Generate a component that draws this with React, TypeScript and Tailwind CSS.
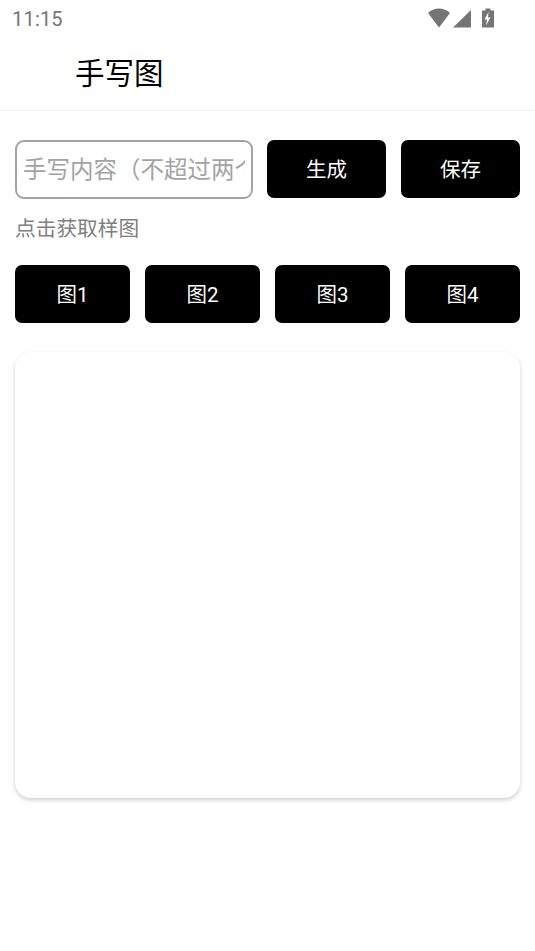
const cjk = "font-['Roboto','Noto_Sans_CJK_SC',sans-serif]";

function StatusIcons() {
  return (
    <svg width="66" height="24" viewBox="0 0 66 24" fill="#757575">
      <path d="M0 6C3 3 7 1.500 11 1.500S19 3 22 6L11 20.500Z" />
      <path d="M25 20.500 43 3V20.500Z" />
      <path fillRule="evenodd" d="M54 3.500h3.500V1.500h5v2H66V20.500H54ZM60.500 5 56.500 12.500H59l-1 6 4.500-8H60Z" />
    </svg>
  );
}

function BlackButton({ label, className }: { label: string; className: string }) {
  return (
    <button className={`flex h-[58px] items-center justify-center rounded-[7px] bg-black pt-[3px] text-[20.500px] text-white ${className}`}>
      {label}
    </button>
  );
}

export default function App() {
  return (
    <div className={`flex h-[951px] w-[535px] flex-col bg-white ${cjk}`}>
      <div className="flex h-[37px] items-center justify-between pl-[12px] pr-[41px]">
        <span className="text-[20px] leading-none tracking-[0.2px] text-[#757575]">11:15</span>
        <StatusIcons />
      </div>

      <div className="flex h-[74px] items-center border-b border-[#eeeeee] pl-[75px] pt-[3px]">
        <h1 className="text-[29.500px] leading-none font-normal text-black">手写图</h1>
      </div>

      <div className="flex flex-col px-[15px] pt-[29px]">
        <div className="flex items-start gap-[14px]">
          <input
            className="h-[59px] w-[238px] rounded-[9px] border-2 border-[#a3a3a3] px-[6px] text-[23.500px] outline-none placeholder:text-[#a3a3a3]"
            placeholder="手写内容（不超过两个字）"
          />
          <div className="flex flex-1 gap-[15px]">
            <BlackButton label="生成" className="flex-1" />
            <BlackButton label="保存" className="flex-1" />
          </div>
        </div>

        <p className="mt-[17px] text-[20.700px] leading-[27px] text-[#808080]">点击获取样图</p>

        <div className="mt-[22px] grid grid-cols-4 gap-[15px]">
          <BlackButton label="图1" className="" />
          <BlackButton label="图2" className="" />
          <BlackButton label="图3" className="" />
          <BlackButton label="图4" className="" />
        </div>

        <div className="mt-[29px] h-[446px] rounded-[16px] bg-white shadow-[0_2px_4px_rgba(0,0,0,0.2)]" />
      </div>
    </div>
  );
}
